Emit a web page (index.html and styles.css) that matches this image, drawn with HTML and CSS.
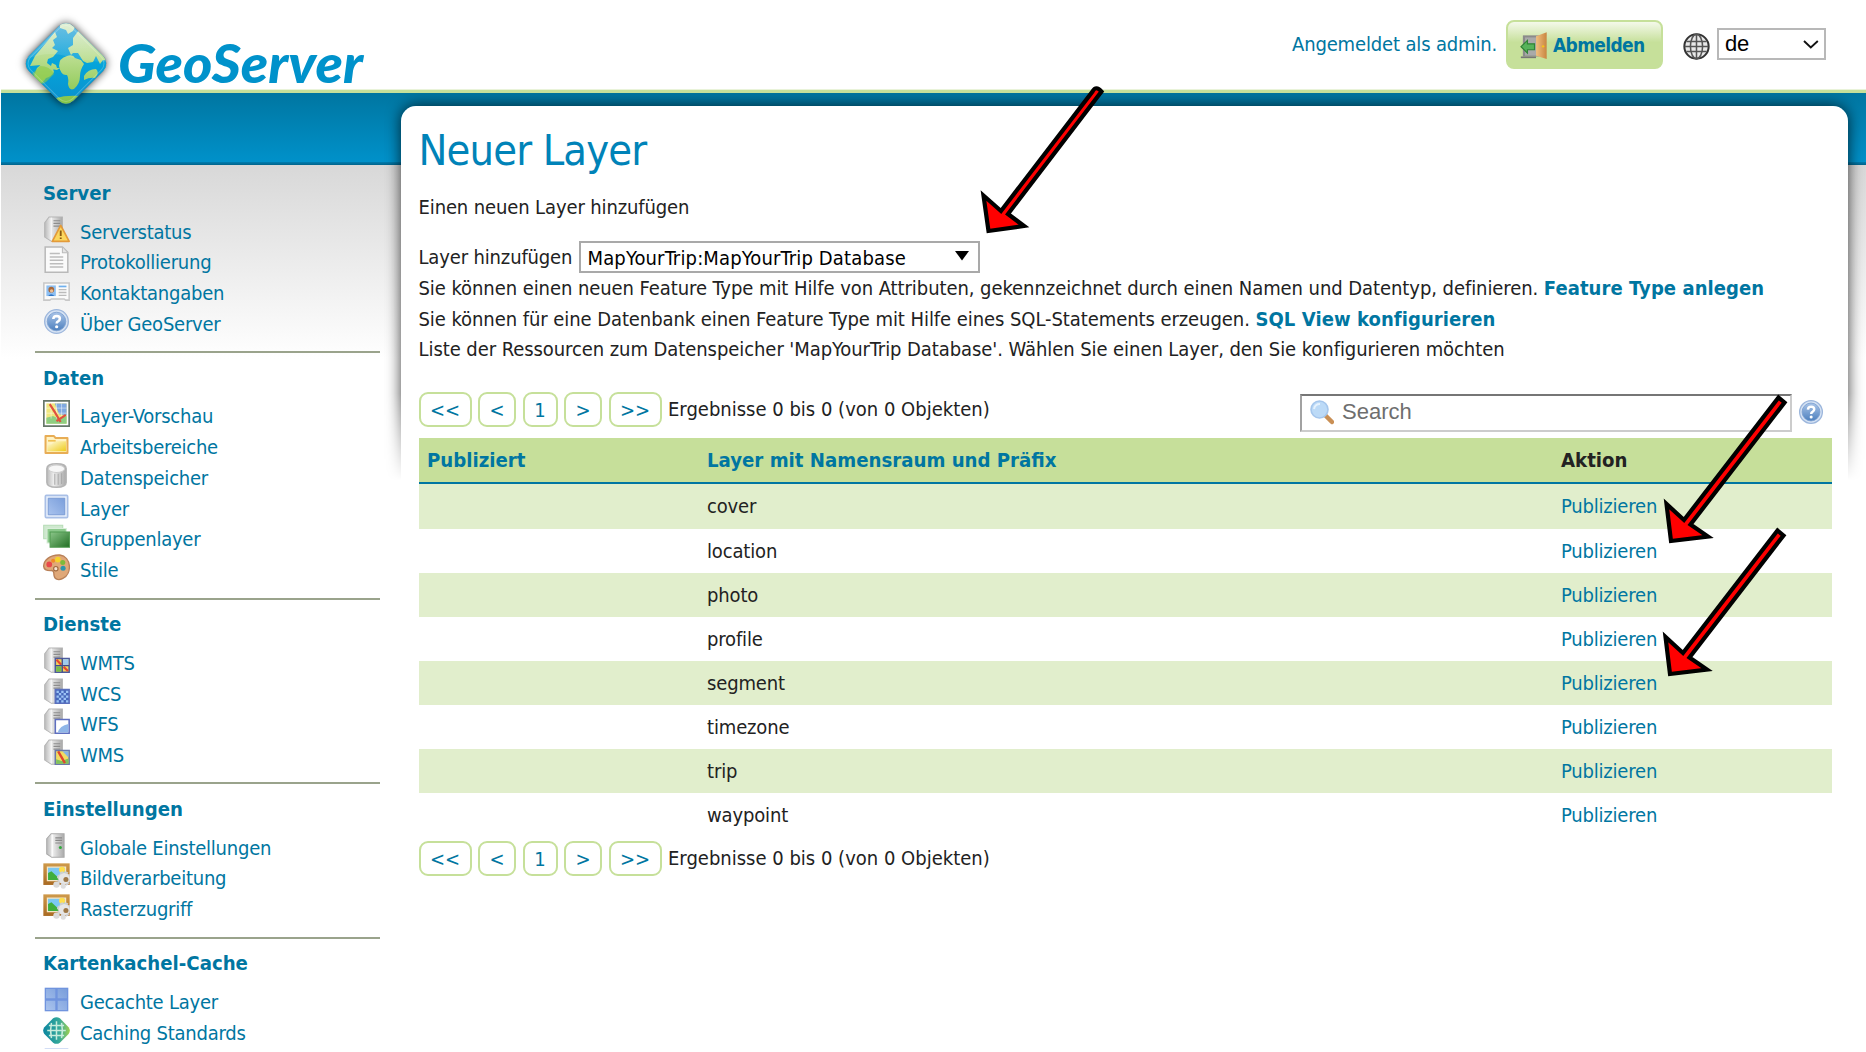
FILE: index.html
```html
<!DOCTYPE html>
<html lang="de">
<head>
<meta charset="utf-8">
<title>GeoServer: Neuer Layer</title>
<link rel="stylesheet" href="styles.css">
</head>
<body>
<svg class="defs" aria-hidden="true">
  <defs>
    <linearGradient id="gServer" x1="0" x2="1"><stop offset="0" stop-color="#b9b9b9"/><stop offset=".35" stop-color="#ededed"/><stop offset="1" stop-color="#a9a9a9"/></linearGradient>
    <linearGradient id="gBlue" x1="0" y1="1" x2="1" y2="0"><stop offset="0" stop-color="#a9c3ee"/><stop offset="1" stop-color="#7a9edb"/></linearGradient>
    <linearGradient id="gHelp" x1="0" y1="0" x2="0" y2="1"><stop offset="0" stop-color="#a9c4e8"/><stop offset="1" stop-color="#4d80be"/></linearGradient>
    <linearGradient id="gFolder" x1="0" y1="0" x2="1" y2="1"><stop offset="0" stop-color="#fffbe0"/><stop offset="1" stop-color="#eecb1c"/></linearGradient>
    <linearGradient id="gGreen" x1="0" y1="0" x2="1" y2="1"><stop offset="0" stop-color="#8cc78a"/><stop offset="1" stop-color="#226f24"/></linearGradient>
    <linearGradient id="gWood" x1="0" y1="0" x2="0" y2="1"><stop offset="0" stop-color="#cf9a4b"/><stop offset="1" stop-color="#a96a22"/></linearGradient>
    <linearGradient id="gTeal" x1="0" x2="1"><stop offset="0" stop-color="#0c86a0"/><stop offset=".6" stop-color="#35a99a"/><stop offset="1" stop-color="#9fd050"/></linearGradient>
    <linearGradient id="gDoor" x1="0" x2="1"><stop offset="0" stop-color="#f0c080"/><stop offset="1" stop-color="#c98540"/></linearGradient>
    <linearGradient id="gSea" x1="0" y1="0" x2="0" y2="1"><stop offset="0" stop-color="#37a7d8"/><stop offset=".5" stop-color="#05a4da"/><stop offset="1" stop-color="#0a8ccb"/></linearGradient>
    <linearGradient id="gLand" x1="0" y1="0" x2="0" y2="1"><stop offset="0" stop-color="#d6ebcb"/><stop offset=".45" stop-color="#b8dc8c"/><stop offset="1" stop-color="#7fc241"/></linearGradient>
    <linearGradient id="gShine" x1="0" y1="0" x2="0" y2="1"><stop offset="0" stop-color="#fff" stop-opacity=".3"/><stop offset="1" stop-color="#fff" stop-opacity=".08"/></linearGradient>

    <symbol id="server" viewBox="0 0 16 16">
      <path d="M1 4 3.600 .6H11.500V15H5L1 12.500Z" fill="url(#gServer)" stroke="#b4b4b4" stroke-width=".6"/>
      <path d="M5 1v13.500" stroke="#f5f5f5" stroke-width=".7"/>
      <path d="M6.200 2.800h4M6.200 4.400h4M6.200 6h4" stroke="#8d8d8d" stroke-width=".7"/>
    </symbol>
    <symbol id="status" viewBox="0 0 16 16">
      <use href="#server"/>
      <path d="M10.500 5.600 15.500 15H5.500Z" fill="#fbd75e" stroke="#e39a3a" stroke-linejoin="round"/>
      <path d="M10.500 8.600v3.200M10.500 12.700v1" stroke="#8a5a10" stroke-width="1.100"/>
    </symbol>
    <symbol id="page" viewBox="0 0 16 16">
      <path d="M1.300 .6H11.500L14.700 3.800V15.500H1.300Z" fill="#fafafa" stroke="#b9b9b9" stroke-width=".9"/>
      <path d="M11.500 .8V4h3" fill="#e4e4e4" stroke="#bbb" stroke-width=".6"/>
      <path d="M4 4.500h6M4 6.500h8M4 8.500h8M4 10.500h8M4 12.500h8" stroke="#bdbdbd" stroke-width=".9"/>
    </symbol>
    <symbol id="vcard" viewBox="0 0 16 16">
      <path d="M.5 3.500h15V13.700H13.500L12.500 13H5L4 13.700H.5Z" fill="#fafafa" stroke="#c8c8c8" stroke-width=".9"/>
      <path d="M2 5h5.600v6.300H2Z" fill="#8dbff2"/><path d="M3 11.300q1.800-2.300 3.800 0Z" fill="#2f74c4"/>
      <circle cx="4.900" cy="7.500" r="1.700" fill="#a8683a"/><circle cx="5.100" cy="8.200" r="1" fill="#edbf94"/>
      <path d="M9.300 5.600h4.600" stroke="#6fb0ee" stroke-width="1"/><path d="M9.300 7.500h4.600M9.300 9.200h4.600M9.300 10.900h4.600" stroke="#bbb" stroke-width=".8"/>
    </symbol>
    <symbol id="help" viewBox="0 0 16 16">
      <circle cx="8" cy="8" r="7" fill="#d5e2f3" stroke="#9cb6dc" stroke-width=".8"/><circle cx="8" cy="8" r="5.500" fill="url(#gHelp)" stroke="#7b9fd0" stroke-width=".5"/>
      <path d="M6.100 6.500q.1-1.800 2-1.800 1.900.1 1.900 1.600 0 1-1.100 1.600-.8.4-.8 1.300" fill="none" stroke="#fff" stroke-width="1.500"/><circle cx="8.100" cy="11.100" r=".95" fill="#fff"/>
    </symbol>
    <symbol id="map" viewBox="0 0 16 16">
      <path d="M.5.500h15v15H.5Z" fill="#fff" stroke="#67776a" stroke-width="1"/>
      <path d="M2 2h12v12H2Z" fill="#f0e77e"/><path d="M7 2h7v7L9.500 8.500Z" fill="#7fa9e0"/>
      <path d="M2 10.500 6 9.500 9 11 14 9.500V14H2Z" fill="#8fce82"/>
      <path d="M2 4.800h12M2 7.800h12M4.800 2v9M8 2v9M11 2v9" stroke="#fff" stroke-opacity=".55" stroke-width=".5"/>
      <path d="M4 2.400 7.200 7.500 10.400 13M8 12.500 13.500 8.800" fill="none" stroke="#e0513f" stroke-width="1.300"/>
    </symbol>
    <symbol id="folder" viewBox="0 0 16 16">
      <path d="M1.500 3h5l1 1.200h7v8.800h-13Z" fill="#fff3c4" stroke="#e8ad55" stroke-width="1.200" stroke-linejoin="round"/>
      <path d="M2.600 8 5 7.800 7 6h6.600v6H2.600Z" fill="url(#gFolder)"/><path d="M3 5.800h4.500" stroke="#f0c052" stroke-width="1"/>
    </symbol>
    <symbol id="db" viewBox="0 0 16 16">
      <path d="M2.300 3.800Q2.300 1 8 1t5.700 2.800v8.400Q13.700 15 8 15t-5.700-2.800Z" fill="url(#gServer)" stroke="#b4b4b4" stroke-width=".9"/>
      <ellipse cx="8" cy="4" rx="4.800" ry="2.200" fill="#f7f7f7" stroke="#ccc" stroke-width=".6"/>
      <path d="M7 7v6.500M9 7v6.500M11 6.700v6.300" stroke="#aaa" stroke-width=".6"/>
    </symbol>
    <symbol id="layer" viewBox="0 0 16 16">
      <rect x="1.400" y="1.400" width="13.200" height="13.200" rx=".6" fill="#e7effb" stroke="#a9bfe6" stroke-width="1"/><path d="M3.100 3.100h9.800v9.800H3.100Z" fill="url(#gBlue)" stroke="#7294d0" stroke-width=".5"/>
    </symbol>
    <symbol id="group" viewBox="0 0 16 16">
      <path d="M.4 1.300h11.300v8H.4Z" fill="#cfe8cf" stroke="#b5dcb5" stroke-width=".6"/><path d="M2.400 3.300h11.400v8.500H2.400Z" fill="#8cc98c" stroke="#d8eed8" stroke-width=".6"/>
      <path d="M4.200 5.300h11.600v9H4.200Z" fill="url(#gGreen)" stroke="#4f9a50" stroke-width=".6"/>
    </symbol>
    <symbol id="palette" viewBox="0 0 16 16">
      <path d="M10 .6C4 .3.3 4 .4 7.300c.2 2.300 2.800 2.600 4.600 2.500 2 0 1.200 1.700 1.600 3.200.5 2.400 3 2.600 5.200 1.500C17.500 11.500 16.800 1.500 10 .6Z" fill="#e0a878" stroke="#b98058" stroke-width=".8"/>
      <circle cx="3.700" cy="6.200" r="1.700" fill="#e8484a"/><circle cx="6" cy="4" r="1.200" fill="#f08a28"/><circle cx="8.800" cy="3.300" r="1.700" fill="#f5d32a"/><circle cx="11.700" cy="5" r="1.500" fill="#7dbb3a"/><circle cx="11.900" cy="8.400" r="1.500" fill="#2b96ad"/><circle cx="7.600" cy="8.700" r="1.300" fill="#f6e4d2" stroke="#a06a40" stroke-width=".7"/>
    </symbol>
    <symbol id="wmts" viewBox="0 0 16 16"><use href="#server"/>
      <path d="M7.300 6.800h8.200v8.200H7.300Z" fill="#f3d25b" stroke="#4d5a9c" stroke-width=".9"/><path d="M11.600 7.200h3.500v3.400h-3.500Z" fill="#9fcaf0"/><path d="M7.800 11.500h3.200v3.100H7.800Z" fill="#74bd4c"/><path d="M8 7.500l2.800 3M12.200 11.800l2.600 2.400" stroke="#e54632" stroke-width="1.300"/><path d="M11.400 6.800v8.200M7.300 11h8.200" stroke="#3f4b90" stroke-width=".8"/></symbol>
    <symbol id="wcs" viewBox="0 0 16 16"><use href="#server"/>
      <path d="M7.300 6.800h8.200v8.200H7.300Z" fill="#4768bb" stroke="#5a6fbd" stroke-width=".9"/><path d="M8 8.200h7M8 11h7M8 13.800h7" stroke="#9cc3f5" stroke-width="1.300" stroke-dasharray="1.400 1.400"/><path d="M9.400 9.600h5M9.400 12.400h5" stroke="#9cc3f5" stroke-width="1.300" stroke-dasharray="1.400 1.400"/></symbol>
    <symbol id="wfs" viewBox="0 0 16 16"><use href="#server"/>
      <path d="M7.300 6.800h8.200v8.200H7.300Z" fill="#fff" stroke="#5f6fc0" stroke-width=".9"/><path d="M8.800 14.500q1-3.800 6.200-5v5Z" fill="#8fb6e8"/></symbol>
    <symbol id="wms" viewBox="0 0 16 16"><use href="#server"/>
      <path d="M7.300 6.800h8.200v8.200H7.300Z" fill="#f1dd62" stroke="#6a78a8" stroke-width=".9"/><path d="M11.500 7.200h3.600v3.800Z" fill="#86b4e8"/><path d="M7.800 12 11 13l4.100-1.500v3.100H7.800Z" fill="#7fc35c"/><path d="M9 7.300l4 7" stroke="#e0452f" stroke-width="1.400"/></symbol>
    <symbol id="settings" viewBox="0 0 16 16">
      <path d="M2.200 4 4.800 1H12.500V15H5.200L2.200 13Z" fill="url(#gServer)" stroke="#aaa" stroke-width=".6"/><path d="M5.500 1.500v13" stroke="#fafafa"/><path d="M7.300 3.500h4M7.300 5h4M7.300 6.500h4" stroke="#888" stroke-width=".7"/><circle cx="10.300" cy="9.200" r=".9" fill="#2faa3c"/>
    </symbol>
    <symbol id="image" viewBox="0 0 16 16">
      <path d="M.2.800h15.600v12.800H.2Z" fill="url(#gWood)"/><path d="M2.600 3h10.800v8H2.600Z" fill="#7cc8f2" stroke="#f4e6c8" stroke-width=".7"/>
      <path d="M3 10.700V6.500l2-1 5.500 5.200Z" fill="#3fae3c"/><circle cx="11.300" cy="4.600" r="1.800" fill="#ffdf4d"/>
      <circle cx="12.600" cy="9.800" r="3.600" fill="#dcdcdc" stroke="#cfcfcf" stroke-width="1.500" stroke-dasharray="1.900 .9"/><circle cx="12.600" cy="9.800" r="3.200" fill="#e6e6e6"/><circle cx="13.600" cy="10.400" r="1.500" fill="#9f7846"/><circle cx="8" cy="13.400" r="1.900" fill="#dadada"/><circle cx="12" cy="14.300" r="1.500" fill="#dedede"/>
    </symbol>
    <symbol id="tiles" viewBox="0 0 16 16">
      <path d="M1 1h14v14H1Z" fill="#7094de"/><path d="M1.800 1.800h5.500v5.500H1.800ZM8.700 1.800h5.500v5.500H8.700ZM1.800 8.700h5.500v5.500H1.800ZM8.700 8.700h5.500v5.500H8.700Z" fill="url(#gBlue)"/>
    </symbol>
    <symbol id="gwc" viewBox="0 0 16 16">
      <path d="M6 .8Q8-.6 10 .8L15.200 6Q16.600 8 15.200 10L10 15.200Q8 16.600 6 15.200L.8 10Q-.6 8 .8 6Z" fill="url(#gTeal)"/>
      <path d="M8 2.500v11M2.500 8h11M5 3.500Q4 8 5 12.500M11 3.500Q12 8 11 12.500M3.500 5h9M3.500 11h9" fill="none" stroke="#c7ecdc" stroke-width=".9"/>
    </symbol>
  </defs>
</svg>

<header class="header">
  <svg class="logo" viewBox="0 0 370 110" role="img" aria-label="GeoServer">
    <defs><clipPath id="gem"><rect x="34.500" y="32" width="63" height="63" rx="10.500" transform="rotate(45 66 63.500)"/></clipPath></defs>
    <rect class="gem-shadow" x="34.500" y="32" width="63" height="63" rx="10.500" transform="rotate(45 66 63.500)"/>
    <g clip-path="url(#gem)">
      <path d="M20 20h90v90H20Z" fill="url(#gSea)"/>
      <path fill="url(#gLand)" d="M60 22q9-2 16 3l-3 6-5 3-2-4-6-2ZM55 32l2 5-4 3 2 5-3 3 6 3-5 6-5 2-1 4 4 3 1-3 4 2 1 3 3 0-3 2-6-1-4-3-6-1-11 1 5-10ZM42 64q11 1 12 8-3 5-8 6-4 6-8 6l-4-8 3-8ZM59 66q0-8 8-10 6-2 8 2l6 2 3 4q-4 6-4 12 0 8-6 13-5 2-6-5 1-6-1-9-6 1-8-9ZM68 48l5-3 0-7 6-8 12 8 13 15 4 8-5-1-3 4-4-8-3 6-6 1-4-2-5-8-5 0-2 2ZM84 76q4-7 12-7 4 4-1 9-5-1-11 2ZM56 98q10-3 24-2l-8 10H60Z"/>
      <path fill="#8ccb45" d="M40 66q10 0 14 8l-8 8-8 4-6-12Z" opacity=".6"/>
      <path fill="url(#gShine)" d="M20 62Q44 50 66 56T110 62V20H20Z"/>
    </g>
    <rect x="36.500" y="34" width="59" height="59" rx="9" transform="rotate(45 66 63.500)" fill="none" stroke="#fff" stroke-opacity=".22"/>
    <text x="118" y="82.500" textLength="245" lengthAdjust="spacingAndGlyphs">GeoServer</text>
  </svg>
  <div class="session">
    <span class="who">Angemeldet als admin.</span>
    <a class="logout">
      <svg class="icon" viewBox="0 0 16 16"><path d="M1.700 2h9.800v12.500H1.700Z" fill="#8b8b8b"/><path d="M3 3.200h6.500V14H3Z" fill="#a9aaa9"/><path d="M.5 14.500h9v1H.5Z" fill="#777"/><path d="M9.500 2.500 15.800.1V16L9.500 14Z" fill="url(#gDoor)"/><circle cx="13.700" cy="8.500" r=".7" fill="#f6c319"/><path d="M.6 8.700 4.400 5v2h4.200v3.500H4.400v2Z" fill="#57b35a" stroke="#2f8435" stroke-width=".7"/></svg>
      <span>Abmelden</span>
    </a>
    <svg class="icon globe" viewBox="0 0 16 16"><circle cx="8" cy="8" r="7.200" fill="#e8e8e8" stroke="#333" stroke-width="1.200"/><g fill="none" stroke="#555" stroke-width=".9"><path d="M8 1v14M1 8h14M2 5h12M2 11h12"/><ellipse cx="8" cy="8" rx="3.600" ry="7.200"/></g></svg>
    <div class="select lang"><span>de</span><svg viewBox="0 0 16 9"><path d="M1 1l6.800 6.500L14.800 1" fill="none" stroke="#111" stroke-width="1.900"/></svg></div>
  </div>
</header>

<div class="page">
  <nav class="sidebar">
    <section><h2>Server</h2><ul>
      <li><svg class="icon"><use href="#status"/></svg><a>Serverstatus</a></li>
      <li><svg class="icon"><use href="#page"/></svg><a>Protokollierung</a></li>
      <li><svg class="icon"><use href="#vcard"/></svg><a>Kontaktangaben</a></li>
      <li><svg class="icon"><use href="#help"/></svg><a>Über GeoServer</a></li></ul></section>
    <section><h2>Daten</h2><ul>
      <li><svg class="icon"><use href="#map"/></svg><a>Layer-Vorschau</a></li>
      <li><svg class="icon"><use href="#folder"/></svg><a>Arbeitsbereiche</a></li>
      <li><svg class="icon"><use href="#db"/></svg><a>Datenspeicher</a></li>
      <li><svg class="icon"><use href="#layer"/></svg><a>Layer</a></li>
      <li><svg class="icon"><use href="#group"/></svg><a>Gruppenlayer</a></li>
      <li><svg class="icon"><use href="#palette"/></svg><a>Stile</a></li></ul></section>
    <section><h2>Dienste</h2><ul>
      <li><svg class="icon"><use href="#wmts"/></svg><a>WMTS</a></li>
      <li><svg class="icon"><use href="#wcs"/></svg><a>WCS</a></li>
      <li><svg class="icon"><use href="#wfs"/></svg><a>WFS</a></li>
      <li><svg class="icon"><use href="#wms"/></svg><a>WMS</a></li></ul></section>
    <section><h2>Einstellungen</h2><ul>
      <li><svg class="icon"><use href="#settings"/></svg><a>Globale Einstellungen</a></li>
      <li><svg class="icon"><use href="#image"/></svg><a>Bildverarbeitung</a></li>
      <li><svg class="icon"><use href="#image"/></svg><a>Rasterzugriff</a></li></ul></section>
    <section><h2>Kartenkachel-Cache</h2><ul>
      <li><svg class="icon"><use href="#tiles"/></svg><a>Gecachte Layer</a></li>
      <li><svg class="icon"><use href="#gwc"/></svg><a>Caching Standards</a></li>
      <li><svg class="icon"><use href="#tiles"/></svg></li></ul></section>
  </nav>

  <main class="content">
    <div class="shade"></div>
    <h1>Neuer Layer</h1>
    <p class="intro">Einen neuen Layer hinzufügen</p>
    <div class="store"><label>Layer hinzufügen</label>
      <div class="select"><span>MapYourTrip:MapYourTrip Database</span><svg viewBox="0 0 14 10"><path d="M0 0h14L7 9.500Z"/></svg></div>
    </div>
    <p class="text">Sie können einen neuen Feature Type mit Hilfe von Attributen, gekennzeichnet durch einen Namen und Datentyp, definieren. <a>Feature Type anlegen</a></p>
    <p class="text">Sie können für eine Datenbank einen Feature Type mit Hilfe eines SQL-Statements erzeugen. <a>SQL View konfigurieren</a></p>
    <p class="text">Liste der Ressourcen zum Datenspeicher 'MapYourTrip Database'. Wählen Sie einen Layer, den Sie konfigurieren möchten</p>

    <div class="toolbar">
      <div class="pager"><a class="wide">&lt;&lt;</a><a>&lt;</a><a class="num">1</a><a>&gt;</a><a class="wide">&gt;&gt;</a><span>Ergebnisse 0 bis 0 (von 0 Objekten)</span></div>
      <div class="search">
        <div class="field"><svg viewBox="0 0 24 24"><path d="M15.500 15.500 22 22" stroke="#c98f55" stroke-width="4.500" stroke-linecap="round"/><circle cx="9.500" cy="9.500" r="8.500" fill="#bcdaf7" stroke="#a5c6ec" stroke-width="1.600"/><path d="M4 9q1-5 6-5" fill="none" stroke="#e6f2fd" stroke-width="2"/></svg><span>Search</span></div>
        <svg class="tip"><use href="#help"/></svg>
      </div>
    </div>

    <table>
      <thead><tr><th class="pub"><a>Publiziert</a></th><th class="name"><a>Layer mit Namensraum und Präfix</a></th><th>Aktion</th></tr></thead>
      <tbody>
        <tr class="first"><td></td><td>cover</td><td><a>Publizieren</a></td></tr>
        <tr><td></td><td>location</td><td><a>Publizieren</a></td></tr>
        <tr><td></td><td>photo</td><td><a>Publizieren</a></td></tr>
        <tr><td></td><td>profile</td><td><a>Publizieren</a></td></tr>
        <tr><td></td><td>segment</td><td><a>Publizieren</a></td></tr>
        <tr><td></td><td>timezone</td><td><a>Publizieren</a></td></tr>
        <tr><td></td><td>trip</td><td><a>Publizieren</a></td></tr>
        <tr><td></td><td>waypoint</td><td><a>Publizieren</a></td></tr>
      </tbody>
    </table>
    <div class="pager"><a class="wide">&lt;&lt;</a><a>&lt;</a><a class="num">1</a><a>&gt;</a><a class="wide">&gt;&gt;</a><span>Ergebnisse 0 bis 0 (von 0 Objekten)</span></div>
  </main>
</div>

<svg class="arrows" viewBox="0 0 1866 1052">
  <path d="M988.500 231 983.500 195.500 1001 211 1092.500 91.500Q1096 85 1101.500 91.500L1008 214 1024 226Z"/>
  <path d="M1671 541 1666.500 504 1684 520 1778.500 397.500 1784.500 402.500 1690.500 524.500 1708 536.500Z"/>
  <path d="M1670 674 1665.500 637 1683 653 1777.500 530.500 1783.500 535.500 1689.500 657.500 1707 669.500Z"/>
</svg>
</body>
</html>
```
FILE: styles.css
```css
* { box-sizing: border-box; }

html, body { margin: 0; }

body {
  width: 1866px;
  height: 1052px;
  overflow: hidden;
  position: relative;
  background: #fff;
  border-left: 1px solid #fff;
  font: 20px/30.7px "DejaVu Sans Condensed", "DejaVu Sans", sans-serif;
  letter-spacing: -.15px;
  color: #222;
}

h1, h2, p, ul { margin: 0; padding: 0; }
ul { list-style: none; }
a { color: #0076a1; }
.defs { position: absolute; width: 0; height: 0; }
.icon { width: 27px; height: 27px; flex: none; }

.header {
  position: relative;
  z-index: 1;
  height: 93px;
  display: flex;
  justify-content: space-between;
  border-bottom: 3px solid #c6e09a;
  box-shadow: inset 0 -1px #e9f3d9;
}

.logo {
  width: 370px;
  height: 110px;
  margin-left: -1px;
  flex: none;
  overflow: visible;
}
.logo text { font: italic 900 53px Lato, sans-serif; letter-spacing: 0; fill: #0092cb; }
.gem-shadow { fill: #678; filter: drop-shadow(0 0 4px rgba(0, 0, 0, .75)); }

.session {
  display: flex;
  align-items: flex-start;
  padding-right: 40px;
}
.who { color: #0076a1; margin: 29px 10px 0 0; width: 204px; white-space: nowrap; }
.logout {
  display: flex;
  align-items: center;
  width: 157px;
  height: 49px;
  margin-top: 20px;
  padding: 1px 0 0 12px;
  gap: 6px;
  border: 2px solid #c6e09a;
  border-radius: 8px;
  background: linear-gradient(#f4f9ea, #c6e09a 45%);
  font-weight: bold;
  font-size: 19px;
  letter-spacing: -.65px;
}
.globe { margin: 33px 7px 0 20px; }

.select {
  display: flex;
  align-items: center;
  justify-content: space-between;
  border: 2px solid #a9a9a9;
  background: #fff;
  color: #000;
}
.lang {
  width: 109px;
  height: 32px;
  margin-top: 28px;
  padding: 0 5px 0 6px;
  border-color: #b8b8b8;
  font: 22px/28px "Liberation Sans", Arial, sans-serif;
}
.lang svg { width: 16px; height: 9px; }

.page {
  position: relative;
  z-index: 0;
  display: flex;
  height: 959px;
  background:
    linear-gradient(#007db0, #00648c) 0 69px / 100% 3px no-repeat,
    linear-gradient(#0076a1, #0092cb) 0 0 / 100% 71px no-repeat,
    linear-gradient(#d8d8d8, #fff) 0 72px / 100% 194px no-repeat;
}

.sidebar {
  width: 400px;
  height: 956px;
  overflow: hidden;
  padding: 75.300px 21px 0 34px;
  flex: none;
}
.sidebar section {
  border-bottom: 2px solid #9aa38c;
  padding: 7.500px 0 11.600px;
}
.sidebar h2 {
  padding: 2.200px 0 8.600px 8px;
  font-size: 20.200px;
  line-height: 30px;
  letter-spacing: 0;
  color: #0076a1;
}
.sidebar li {
  display: flex;
  height: 30.750px;
  gap: 10.500px;
  padding-left: 7.500px;
  letter-spacing: -.24px;
}
.sidebar .icon { margin-top: -1px; }

.content {
  position: relative;
  width: 1447px;
  height: 939px;
  margin-top: 13px;
  padding: 18px 16px 0 17.500px;
  border-radius: 15px 15px 0 0;
  background: #fff;
}
/* soft edge around the panel that dies out halfway down */
.shade {
  position: absolute;
  z-index: -1;
  inset: -13px -17px auto -17px;
  height: 390px;
  overflow: hidden;
  -webkit-mask: linear-gradient(#000 300px, transparent 388px);
  mask: linear-gradient(#000 300px, transparent 388px);
}
.shade::before {
  content: "";
  display: block;
  height: 500px;
  margin: 13px 17px 0;
  border-radius: 15px;
  box-shadow: 0 0 15px rgba(0, 0, 0, .75);
}

h1 { font-size: 43px; line-height: 52px; font-weight: normal; letter-spacing: -.85px; color: #0083b8; }
.intro { padding-top: 16px; height: 65px; letter-spacing: -.12px; }
.store { display: flex; height: 32px; }
.store label { width: 160px; line-height: 32px; }
.store .select { width: 401px; height: 32px; padding: 3px 9px 0 7px; letter-spacing: .15px; }
.store svg { width: 14px; height: 10px; margin-top: -5px; }
.text { letter-spacing: -.07px; white-space: nowrap; line-height: 30.700px; }
.text a { font-weight: bold; letter-spacing: .08px; }

.toolbar { display: flex; justify-content: space-between; height: 73px; padding-top: 27px; }
.pager { display: flex; height: 35px; gap: 6.500px; }
.pager a {
  width: 38px;
  height: 35px;
  border: 2px solid #c6e09a;
  border-radius: 9px;
  text-align: center;
  line-height: 33px;
}
.pager a.wide { width: 53px; letter-spacing: 0; }
.pager a.num { width: 35px; }
.pager span { line-height: 35px; letter-spacing: 0; }

.search { display: flex; padding-top: 2px; }
.field {
  display: flex;
  width: 492px;
  height: 38px;
  padding: 0 0 3px 8px;
  gap: 8px;
  align-items: center;
  border: 2px solid;
  border-color: #767676 #ccc #ccc #a2a2a2;
  font: 22px "Liberation Sans", Arial, sans-serif;
  letter-spacing: 0;
  color: #6e6e6e;
}
.field svg { width: 24px; height: 26px; }
.tip { width: 26px; height: 26px; margin: 5px 8px 0 6px; }

table { width: 1413px; table-layout: fixed; border-collapse: separate; border-spacing: 0; margin-bottom: 4px; }
.pub { width: 280px; }
.name { width: 854px; }
th, td { padding: 0 8.500px; text-align: left; }
th { height: 46px; background: #c6df9a; border-bottom: 2px solid #0076a1; font-size: 20.200px; letter-spacing: 0; }
td { height: 44px; }
.first td { height: 45px; }
td a { letter-spacing: -.2px; }
tbody tr:nth-child(odd) td { background: #e1eecc; }

.arrows { position: absolute; left: -1px; top: 0; width: 1866px; height: 1052px; z-index: 3; }
.arrows path { fill: red; stroke: #000; stroke-width: 4.200; stroke-linejoin: miter; }
```
